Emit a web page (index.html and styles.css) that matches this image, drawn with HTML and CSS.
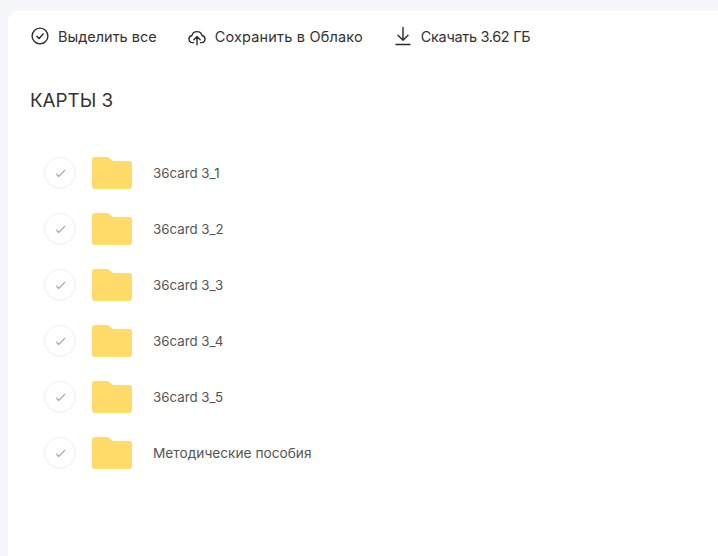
FILE: index.html
```html
<!DOCTYPE html>
<html lang="ru">
<head>
<meta charset="utf-8">
<title>Карты 3</title>
<link rel="stylesheet" href="styles.css">
</head>
<body>
<main class="panel">
  <div class="toolbar">
    <div class="action">
      <svg class="icon" viewBox="0 0 20 20"><circle cx="10" cy="10" r="7.9"/><path d="M6.8 10.3l2.3 2.2 4.1-4.4"/></svg>
      <span>Выделить все</span>
    </div>
    <div class="action action-save">
      <svg class="icon" viewBox="0 0 20 20"><path d="M6.6 16.6H5.4A3.6 3.6 0 0 1 2 13a3.600 3.600 0 0 1 2.900-3.500 5.300 5.300 0 0 1 10.200 0A3.600 3.600 0 0 1 18 13a3.600 3.600 0 0 1-3.400 3.600h-1.200"/><path d="M10 18.800v-8.300M6.800 13.700l3.200-3.200 3.200 3.200"/></svg>
      <span>Сохранить в Облако</span>
    </div>
    <div class="action action-download">
      <svg class="icon" viewBox="0 0 20 20"><path d="M10 1.500v12.500M5 9.200l5 5 5-5M3 18.500h14"/></svg>
      <span>Скачать 3.62 ГБ</span>
    </div>
  </div>
  <h1 class="title">КАРТЫ 3</h1>
  <ul class="list">
    <li class="row"><span class="check"><svg viewBox="0 0 12 10"><path d="M1 5.400l3 2.800 7-7"/></svg></span><svg class="folder" viewBox="0 0 40 32"><path d="M3 0h11c2 0 3 .6 4.300 2 1.200 1.300 2.200 2 4.200 2H37a3 3 0 0 1 3 3v22a3 3 0 0 1-3 3H3a3 3 0 0 1-3-3V3a3 3 0 0 1 3-3z"/></svg><span class="name">36card 3_1</span></li>
    <li class="row"><span class="check"><svg viewBox="0 0 12 10"><path d="M1 5.400l3 2.800 7-7"/></svg></span><svg class="folder" viewBox="0 0 40 32"><path d="M3 0h11c2 0 3 .6 4.300 2 1.200 1.300 2.200 2 4.200 2H37a3 3 0 0 1 3 3v22a3 3 0 0 1-3 3H3a3 3 0 0 1-3-3V3a3 3 0 0 1 3-3z"/></svg><span class="name">36card 3_2</span></li>
    <li class="row"><span class="check"><svg viewBox="0 0 12 10"><path d="M1 5.400l3 2.800 7-7"/></svg></span><svg class="folder" viewBox="0 0 40 32"><path d="M3 0h11c2 0 3 .6 4.300 2 1.200 1.300 2.200 2 4.200 2H37a3 3 0 0 1 3 3v22a3 3 0 0 1-3 3H3a3 3 0 0 1-3-3V3a3 3 0 0 1 3-3z"/></svg><span class="name">36card 3_3</span></li>
    <li class="row"><span class="check"><svg viewBox="0 0 12 10"><path d="M1 5.400l3 2.800 7-7"/></svg></span><svg class="folder" viewBox="0 0 40 32"><path d="M3 0h11c2 0 3 .6 4.300 2 1.200 1.300 2.200 2 4.200 2H37a3 3 0 0 1 3 3v22a3 3 0 0 1-3 3H3a3 3 0 0 1-3-3V3a3 3 0 0 1 3-3z"/></svg><span class="name">36card 3_4</span></li>
    <li class="row"><span class="check"><svg viewBox="0 0 12 10"><path d="M1 5.400l3 2.800 7-7"/></svg></span><svg class="folder" viewBox="0 0 40 32"><path d="M3 0h11c2 0 3 .6 4.300 2 1.200 1.300 2.200 2 4.200 2H37a3 3 0 0 1 3 3v22a3 3 0 0 1-3 3H3a3 3 0 0 1-3-3V3a3 3 0 0 1 3-3z"/></svg><span class="name">36card 3_5</span></li>
    <li class="row"><span class="check"><svg viewBox="0 0 12 10"><path d="M1 5.400l3 2.800 7-7"/></svg></span><svg class="folder" viewBox="0 0 40 32"><path d="M3 0h11c2 0 3 .6 4.300 2 1.200 1.300 2.200 2 4.200 2H37a3 3 0 0 1 3 3v22a3 3 0 0 1-3 3H3a3 3 0 0 1-3-3V3a3 3 0 0 1 3-3z"/></svg><span class="name name-long">Методические пособия</span></li>
  </ul>
</main>
</body>
</html>
```
FILE: styles.css
```css
* { box-sizing: border-box; }
html, body { height: 100%; }
body {
  margin: 0;
  padding: 11px 0 0 8px;
  overflow: hidden;
  background: #f5f7fa;
  font-family: Inter, "Noto Sans", sans-serif;
}
.panel {
  height: 545px;
  background: #fff;
  border-radius: 10px 0 0 0;
  padding: 15px 0 0 22px;
}
.toolbar { display: flex; height: 20px; gap: 30px; align-items: center; }
.action { display: flex; align-items: center; gap: 8px; font-size: 14.5px; color: #333; }
.action-save { letter-spacing: .17px; }
.action-download { letter-spacing: -.33px; }
.icon { width: 20px; height: 20px; fill: none; stroke: #2b2b2b; stroke-width: 1.4; stroke-linecap: round; stroke-linejoin: round; }
.title { margin: 40px 0 0; font-size: 18.8px; line-height: 30px; font-weight: 400; color: #333; }
.list { list-style: none; margin: 29px 0 0 14px; padding: 0; }
.row { display: flex; align-items: center; height: 56px; }
.check { width: 32px; height: 32px; display: flex; align-items: center; justify-content: center; border: 1px solid #eee; border-radius: 50%; flex: none; }
.check svg { width: 11px; height: 9px; fill: none; stroke: #a3a3a3; stroke-width: 1.4; }
.folder { width: 40px; height: 32px; margin-left: 16px; fill: #ffdc6a; flex: none; }
.name { margin-left: 21px; font-size: 13.3px; color: #555; }
.name-long { font-size: 13.7px; }
```
